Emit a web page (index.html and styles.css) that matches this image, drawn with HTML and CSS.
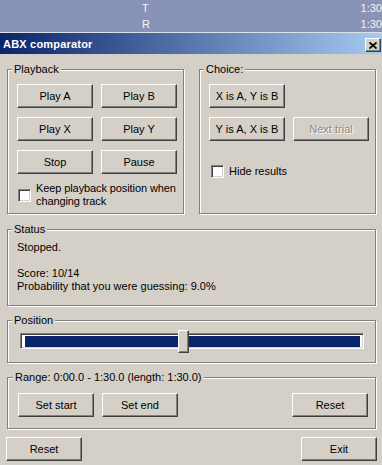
FILE: index.html
```html
<!doctype html>
<html lang="en">
<head>
    <meta charset="utf-8">
    <title>ABX comparator</title>
    <link rel="stylesheet" href="styles.css">
</head>
<body>
    <div class="playlist">
        <div class="track"><span class="track-title">T</span><span class="track-time">1:30</span></div>
        <div class="track"><span class="track-title">R</span><span class="track-time">1:30</span></div>
    </div>
    <div class="window">
        <div class="titlebar">
            <span class="title">ABX comparator</span>
            <button type="button" class="close-button" aria-label="Close">
                <svg width="8" height="7" viewBox="0 0 8 7"><path d="M0.5 0.5L7.5 6.5M7.5 0.5L0.5 6.5" stroke="#000" stroke-width="1.7" fill="none"/></svg>
            </button>
        </div>
        <div class="dialog">
            <div class="top-row">
                <fieldset class="group group-playback">
                    <legend>Playback</legend>
                    <div class="button-grid">
                        <button type="button" class="btn">Play A</button>
                        <button type="button" class="btn">Play B</button>
                        <button type="button" class="btn">Play X</button>
                        <button type="button" class="btn">Play Y</button>
                        <button type="button" class="btn">Stop</button>
                        <button type="button" class="btn">Pause</button>
                    </div>
                    <label class="check check-keep">
                        <input type="checkbox">
                        <span>Keep playback position when changing track</span>
                    </label>
                </fieldset>
                <fieldset class="group group-choice">
                    <legend>Choice:</legend>
                    <div class="button-grid">
                        <button type="button" class="btn">X is A, Y is B</button>
                        <span></span>
                        <button type="button" class="btn">Y is A, X is B</button>
                        <button type="button" class="btn" disabled>Next trial</button>
                    </div>
                    <label class="check check-hide">
                        <input type="checkbox">
                        <span>Hide results</span>
                    </label>
                </fieldset>
            </div>
            <fieldset class="group group-status">
                <legend>Status</legend>
                <p class="status-line">Stopped.</p>
                <p class="status-line status-score">Score: 10/14</p>
                <p class="status-line">Probability that you were guessing: 9.0%</p>
            </fieldset>
            <fieldset class="group group-position">
                <legend>Position</legend>
                <div class="slider">
                    <div class="slider-track"><div class="slider-fill"></div></div>
                    <div class="slider-thumb" style="left: 161px"></div>
                </div>
            </fieldset>
            <fieldset class="group group-range">
                <legend>Range: 0:00.0 - 1:30.0 (length: 1:30.0)</legend>
                <div class="range-buttons">
                    <button type="button" class="btn">Set start</button>
                    <button type="button" class="btn">Set end</button>
                    <button type="button" class="btn btn-right">Reset</button>
                </div>
            </fieldset>
            <div class="footer">
                <button type="button" class="btn">Reset</button>
                <button type="button" class="btn">Exit</button>
            </div>
        </div>
    </div>
</body>
</html>
```

FILE: styles.css
```css
body {
    margin: 0;
    width: 382px;
    height: 465px;
    overflow: hidden;
    background-color: #d4d0c8;
    font-family: "Liberation Sans", Arial, sans-serif;
    font-size: 11px;
    color: #000;
}
.playlist {
    height: 32px;
    background-color: #8893b7;
    border-bottom: 1px solid #dde1ea;
    color: #f4f6fa;
    overflow: hidden;
}
.track {
    display: flex;
    height: 16px;
    line-height: 16px;
}
.track-title {
    margin-left: 142px;
}
.track-time {
    margin-left: auto;
    margin-right: 0;
}
.titlebar {
    height: 21px;
    display: flex;
    align-items: center;
    padding: 0 1px 0 3px;
    background: linear-gradient(to right, #0a246a, #a6caf0);
}
.title {
    color: #fff;
    font-weight: bold;
    font-size: 11px;
    letter-spacing: 0.2px;
}
.close-button {
    margin-left: auto;
    margin-top: 3px;
    width: 16px;
    height: 14px;
    padding: 0;
    display: flex;
    align-items: center;
    justify-content: center;
    background-color: #d4d0c8;
    border: 1px solid;
    border-color: #fff #404040 #404040 #fff;
    box-shadow: inset -1px -1px 0 #808080;
}
.dialog {
    padding: 8px 6px 0 7px;
    display: flex;
    flex-direction: column;
    gap: 7px;
}
.top-row {
    display: grid;
    grid-template-columns: 177px 177px;
    column-gap: 15px;
}
.group {
    margin: 0;
    padding: 0 9px;
    min-width: 0;
    border: 1px solid #808080;
    box-shadow: 1px 1px 0 #fff, inset 1px 1px 0 #fff;
}
.group legend {
    margin-left: -5px;
    padding: 0 2px;
    line-height: 14px;
    background-color: #d4d0c8;
}
.button-grid {
    margin-top: 8px;
    display: grid;
    grid-template-columns: 76px 76px;
    grid-auto-rows: 24px;
    column-gap: 8px;
    row-gap: 9px;
}
.btn {
    font: inherit;
    color: #000;
    height: 24px;
    width: 76px;
    padding: 0;
    background-color: #d4d0c8;
    border: 1px solid;
    border-color: #fff #404040 #404040 #fff;
    box-shadow: inset -1px -1px 0 #808080;
}
.btn:disabled {
    color: #8c8a85;
    text-shadow: 1px 1px 0 #fff;
}
.check {
    display: flex;
    align-items: center;
    gap: 5px;
    line-height: 13px;
}
.check input {
    appearance: none;
    margin: 0;
    width: 13px;
    height: 13px;
    flex-shrink: 0;
    background-color: #fff;
    border: 1px solid;
    border-color: #808080 #fff #fff #808080;
    box-shadow: inset 1px 1px 0 #404040, inset -1px -1px 0 #d4d0c8;
}
.check-keep {
    margin: 8px -8px 5px 1px;
    letter-spacing: -0.1px;
}
.check-hide {
    margin: 24px 0 0 2px;
}
.group-status {
    margin-top: 1px;
    padding-top: 5px;
    padding-bottom: 12px;
}
.status-line {
    margin: 0;
    line-height: 13px;
}
.status-score {
    margin-top: 13px;
}
.group-position {
    padding-top: 3px;
    padding-bottom: 9px;
}
.slider {
    position: relative;
    height: 23px;
    padding: 3px 2px 0 3px;
    box-sizing: border-box;
}
.slider-track {
    height: 16px;
    box-sizing: border-box;
    padding: 2px 3px 1px 4px;
    background-color: #fff;
    border: 1px solid;
    border-color: #808080 #fff #fff #808080;
    box-shadow: inset 1px 1px 0 #404040, inset -1px -1px 0 #d4d0c8;
}
.slider-fill {
    height: 100%;
    background-color: #0a246a;
}
.slider-thumb {
    position: absolute;
    top: 0;
    width: 11px;
    height: 23px;
    box-sizing: border-box;
    background-color: #d4d0c8;
    border: 1px solid;
    border-color: #fff #404040 #404040 #fff;
    box-shadow: inset -1px -1px 0 #808080;
}
.group-range {
    padding: 9px 7px 11px 10px;
}
.range-buttons {
    display: flex;
    gap: 8px;
}
.btn-right {
    margin-left: auto;
}
.footer {
    margin: 1px -1px 0;
    display: flex;
    justify-content: space-between;
}
```
